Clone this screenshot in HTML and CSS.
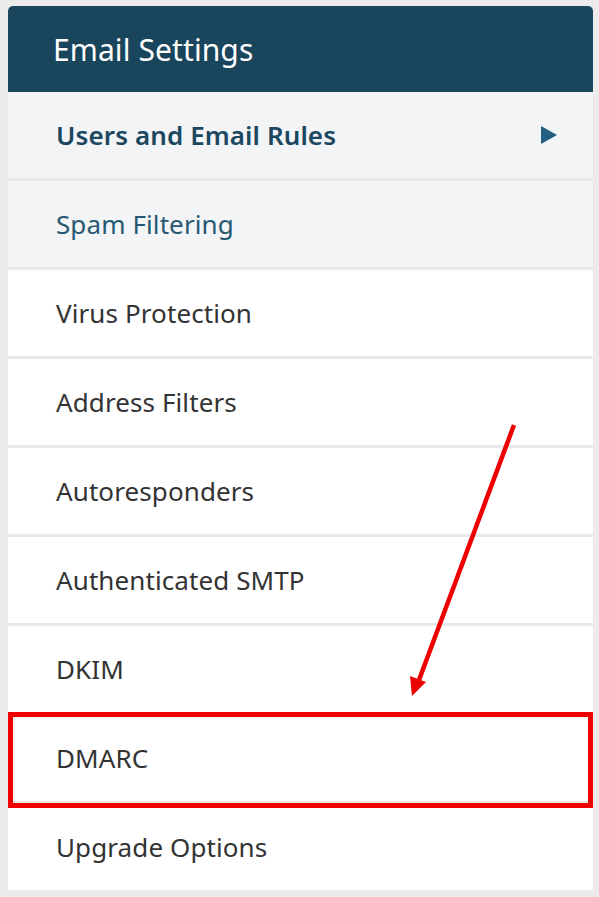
FILE: index.html
```html
<!DOCTYPE html>
<html lang="en">
<head>
  <meta charset="UTF-8">
  <title>Email Settings</title>
  <link rel="stylesheet" href="styles.css">
</head>
<body>
  <div class="settings-panel">
    <div class="settings-header">Email Settings</div>
    <ul class="settings-menu">
      <li class="menu-item active"><span>Users and Email Rules</span><span class="menu-arrow"></span></li>
      <li class="menu-item shaded">Spam Filtering</li>
      <li class="menu-item">Virus Protection</li>
      <li class="menu-item">Address Filters</li>
      <li class="menu-item">Autoresponders</li>
      <li class="menu-item">Authenticated SMTP</li>
      <li class="menu-item">DKIM</li>
      <li class="menu-item">DMARC</li>
      <li class="menu-item">Upgrade Options</li>
    </ul>
  </div>

  <!-- annotation overlay -->
  <div class="highlight-box"></div>
  <svg class="pointer" width="599" height="897" viewBox="0 0 599 897">
    <line x1="514" y1="425" x2="419" y2="680" stroke="#ee0000" stroke-width="4.5"/>
    <polygon points="412,696 410,676 426,682" fill="#ee0000"/>
  </svg>
</body>
</html>
```

FILE: styles.css
```css
body { margin: 0; background: #ebebeb; padding: 6px 6px 7px 8px; font-family: "Noto Sans", "Open Sans", sans-serif; }
.settings-panel { width: 585px; background: #fff; border-radius: 5px 5px 0 0; overflow: hidden; }
.settings-header {
  background: #19465c; color: #fff; height: 86px; box-sizing: border-box;
  padding: 0 0 0 45px; display: flex; align-items: center; font-size: 30px; letter-spacing: 0.1px;
}
.settings-menu { list-style: none; margin: 0; padding: 0; }
.menu-item {
  height: 89px; box-sizing: border-box; border-bottom: 3px solid #e8e9ea;
  display: flex; align-items: center; justify-content: space-between;
  padding: 0 36px 0 48px; font-size: 26px; color: #333; letter-spacing: 0.1px;
}
.menu-item:last-child { border-bottom: none; height: 86px; }
.menu-item.active { background: #f3f4f6; color: #1b4860; font-weight: 600; }
.menu-item.shaded { background: #f3f4f6; color: #265872; }
.menu-arrow {
  width: 0; height: 0; border-left: 16px solid #245e80;
  border-top: 9px solid transparent; border-bottom: 9px solid transparent;
}
.highlight-box {
  position: absolute; left: 8px; top: 712px; width: 585px; height: 96px;
  box-sizing: border-box; border: 5px solid #ee0000;
}
.pointer { position: absolute; left: 0; top: 0; pointer-events: none; }
```
